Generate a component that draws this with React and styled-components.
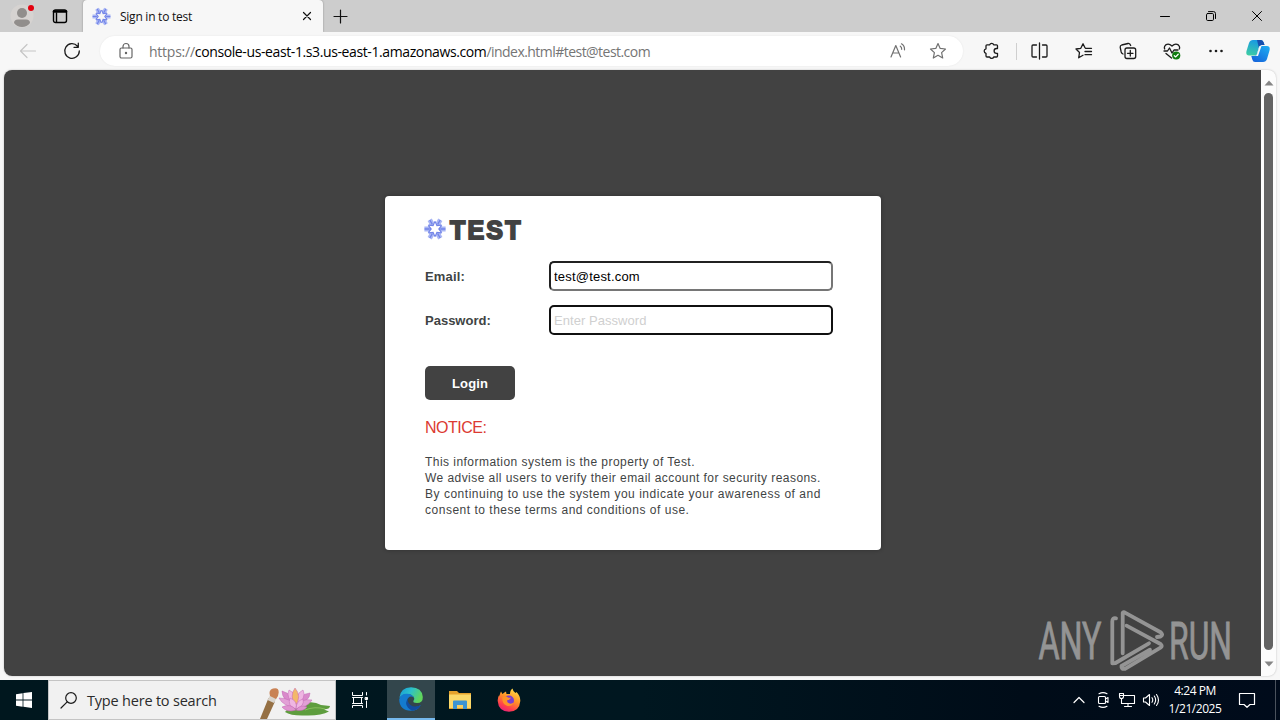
import React from 'react';
import styled, { createGlobalStyle, css } from 'styled-components';


const GlobalStyle = createGlobalStyle`
  * {
    box-sizing: border-box;
  }

  body {
    margin: 0;
    overflow: hidden;
    font-family: 'Open Sans', 'Noto Sans', sans-serif;
  }
`;

const Screen = styled.div`
  width: 1280px;
  height: 720px;
  display: flex;
  flex-direction: column;
  background-color: #f7f7f7;
`;

const center = css`
  display: flex;
  align-items: center;
  justify-content: center;
`;

/* tab strip */

const TabStrip = styled.div`
  height: 32px;
  display: flex;
  background-color: #cdcdcd;
`;

const StripButton = styled.div`
  ${center}
  width: ${({ $width }) => $width}px;
  height: 32px;
`;

const Tab = styled.div`
  width: 240px;
  height: 32px;
  padding: 0 8px 0 10px;
  display: flex;
  align-items: center;
  background-color: #f7f7f7;
  border-radius: 4px 4px 0 0;
  box-shadow: 0 0 2px rgba(0, 0, 0, 0.35);
  clip-path: inset(0 -3px 0 -3px);
`;

const TabTitle = styled.span`
  flex: 1;
  margin-left: 10px;
  font-size: 12px;
  letter-spacing: -0.25px;
  color: #111;
`;

const WindowButtons = styled.div`
  display: flex;
  margin-left: auto;
`;

/* toolbar */

const Toolbar = styled.div`
  height: 38px;
  padding: 0 2px 0 6px;
  display: flex;
  align-items: center;
`;

const ToolButton = styled.div`
  ${center}
  width: ${({ $width = 44 }) => $width}px;
  height: 38px;
  margin-right: ${({ $gap = 0 }) => $gap}px;
`;

const AddressBar = styled.div`
  width: 863px;
  height: 30px;
  margin: 0 6px;
  padding: 0 16px 0 18px;
  display: flex;
  align-items: center;
  gap: 22px;
  background-color: #fff;
  border-radius: 15px;
  box-shadow: 0 0 2px rgba(0, 0, 0, 0.08);
`;

const Url = styled.div`
  flex: 1;
  margin-left: -7px;
  font-size: 14px;
  letter-spacing: -0.24px;
  white-space: nowrap;
  color: #757575;
`;

const Host = styled.span`
  letter-spacing: -0.39px;
  color: #000;
`;

const Path = styled.span`
  letter-spacing: -0.54px;
`;

const Divider = styled.div`
  width: 1px;
  height: 17px;
  margin: 0 0 0 3px;
  background-color: #cfcfcf;
`;

/* page */

const Viewport = styled.div`
  position: relative;
  width: 1272px;
  height: 606px;
  margin-left: 4px;
  display: flex;
  border-radius: 8px;
  overflow: hidden;
  background-color: #fcfcfc;
  box-shadow: 0 0 2px rgba(0, 0, 0, 0.25);
`;

const Page = styled.div`
  width: 1257px;
  padding: 126px 0 0 381px;
  background-color: #424242;
`;

const Scrollbar = styled.div`
  width: 15px;
  padding-top: 10px;
  display: flex;
  flex-direction: column;
  align-items: center;
`;

const Thumb = styled.div`
  width: 9px;
  height: 557px;
  margin: 7px 0 11px;
  border-radius: 5px;
  background-color: #636363;
`;

const Card = styled.form`
  width: 496px;
  height: 354px;
  padding: 20px 40px 0;
  background-color: #fff;
  border-radius: 4px;
  box-shadow: 0 0 4px rgba(0, 0, 0, 0.3);
  font-family: 'Liberation Sans', Arial, sans-serif;
  font-size: 13px;
  color: #3f4444;
`;

const Brand = styled.div`
  height: 28px;
  display: flex;
  align-items: center;

  svg {
    margin-bottom: 3px;
  }
`;

const BrandName = styled.span`
  margin-left: 5px;
  font-size: 25px;
  font-weight: bold;
  line-height: 28px;
  letter-spacing: 2.2px;
  color: #424242;
  -webkit-text-stroke: 1.8px #424242;
`;

const Field = styled.label`
  height: 30px;
  margin-top: ${({ $top }) => $top}px;
  display: flex;
  align-items: center;
`;

const FieldLabel = styled.span`
  width: 124px;
  font-weight: bold;
  letter-spacing: ${({ $tracking = 0 }) => $tracking}px;
`;

const Input = styled.input`
  width: 284px;
  height: 30px;
  padding: 1px 3px;
  border: ${({ $focused }) => ($focused ? '2px solid #101010' : '2px inset #767676')};
  border-radius: 5px;
  outline: none;
  background-color: #fff;
  font-family: inherit;
  font-size: 13px;
  letter-spacing: 0.2px;
  color: #000;

  &::placeholder {
    letter-spacing: 0.05px;
    color: #d0d0d0;
  }
`;

const LoginButton = styled.button`
  width: 90px;
  height: 34px;
  margin-top: 31px;
  padding: 0;
  display: block;
  border: 0;
  border-radius: 5px;
  background-color: #424242;
  font-family: inherit;
  font-size: 13px;
  font-weight: bold;
  letter-spacing: 0.1px;
  color: #fff;
`;

const NoticeTitle = styled.div`
  margin-top: 19px;
  font-size: 16px;
  line-height: 18px;
  letter-spacing: -0.5px;
  color: #dc3a32;
`;

const NoticeText = styled.div`
  margin-top: 17px;
  font-size: 12px;
  line-height: 16px;
  white-space: nowrap;
`;

const NoticeLine = styled.div`
  letter-spacing: ${({ $tracking }) => $tracking}px;
`;

const Watermark = styled.svg`
  position: absolute;
  right: 36px;
  bottom: 0;
  width: 204px;
  height: 70px;
  overflow: visible;
  opacity: 0.55;
`;

/* taskbar */

const Taskbar = styled.div`
  height: 40px;
  margin-top: 4px;
  display: flex;
  background: linear-gradient(90deg, #00171e 0%, #001720 50%, #000c18 80%, #000b1b 100%);
  color: #fff;
`;

const TaskButton = styled.div`
  ${center}
  width: 48px;
  height: 40px;
  margin-left: ${({ $left = 0 }) => $left}px;
  background-color: ${({ $active }) => ($active ? '#33464c' : 'transparent')};
  border-bottom: ${({ $active }) => ($active ? '2px solid #76b9ed' : '0')};
`;

const SearchBox = styled.div`
  width: 288px;
  height: 40px;
  padding-left: 11px;
  display: flex;
  align-items: center;
  border: 1px solid #c4c4c4;
  background-color: #f1f1f1;
`;

const SearchText = styled.span`
  flex: 1;
  margin-left: 9px;
  font-size: 14.5px;
  letter-spacing: -0.2px;
  white-space: nowrap;
  color: #2b2b2b;
`;

const Tray = styled.div`
  margin-left: auto;
  display: flex;
  align-items: center;
`;

const TrayItem = styled.div`
  ${center}
  width: ${({ $width = 24 }) => $width}px;
  height: 40px;
`;

const Clock = styled.div`
  width: 64px;
  text-align: center;
  font-size: 12px;
  line-height: 18px;
  letter-spacing: -0.45px;
  white-space: nowrap;
`;

const ShowDesktop = styled.div`
  width: 5px;
  height: 40px;
  border-left: 1px solid #4a525d;
`;

function Icon({ w = 18, h = 18, color = '#1b1b1b', stroke = 1.2, children }) {
  return (
    <svg
      width={w}
      height={h}
      viewBox={`0 0 ${w} ${h}`}
      fill="none"
      stroke={color}
      strokeWidth={stroke}
      strokeLinecap="round"
      strokeLinejoin="round"
    >
      {children}
    </svg>
  );
}

function Snowflake({ size }) {
  return (
    <svg width={size} height={size} viewBox="0 0 20 20" overflow="visible">
      {[0, 60, 120, 180, 240, 300].map((angle) => (
        <g key={angle} transform={`rotate(${angle} 10 10)`}>
          <path d="M-0.6 7.6 L3.4 7.6 L6 10 L3.4 12.4 L-0.6 12.4Z" fill="#a9b6f4" />
          <path d="M-0.4 10 H4.5 M3.3 6.4 L6.1 10 L3.3 13.6" fill="none" stroke="#7284e8" strokeWidth="1.3" />
        </g>
      ))}
    </svg>
  );
}

function TabStripRow() {
  return (
    <TabStrip>
      <StripButton $width={44}>
        <svg width="26" height="26" viewBox="0 0 26 26">
          <circle cx="13" cy="13" r="11.5" fill="#d6d3d1" />
          <circle cx="13" cy="10" r="5" fill="#918e8c" />
          <path d="M5 20 Q5 16.5 9 16.5 H17 Q21 16.5 21 20 Q18 24 13 24 Q8 24 5 20Z" fill="#918e8c" />
          <circle cx="22" cy="5" r="3" fill="#e3000f" />
        </svg>
      </StripButton>
      <StripButton $width={32}>
        <Icon w={16} h={16} color="#000" stroke={1.4}>
          <rect x="1.5" y="2" width="13" height="12.5" rx="2" />
          <path d="M2 3.5 H14" strokeWidth="2.6" />
          <path d="M4.5 5 V14" />
        </Icon>
      </StripButton>
      <StripButton $width={7} />
      <Tab>
        <Snowflake size={17} />
        <TabTitle>Sign in to test</TabTitle>
        <Icon w={16} h={16} color="#111">
          <path d="M4.5 4.5 L11.5 11.5 M11.5 4.5 L4.5 11.5" />
        </Icon>
      </Tab>
      <StripButton $width={35}>
        <Icon w={15} h={15} color="#111" stroke={1.2}>
          <path d="M7.5 1 V14 M1 7.5 H14" />
        </Icon>
      </StripButton>
      <WindowButtons>
        <StripButton $width={46}>
          <Icon w={10} h={10} color="#000" stroke={1}>
            <path d="M0.5 5.5 H9.5" />
          </Icon>
        </StripButton>
        <StripButton $width={46}>
          <Icon w={10} h={10} color="#000" stroke={1}>
            <rect x="0.5" y="2.5" width="7" height="7" rx="1.2" />
            <path d="M2.5 0.6 H7.5 Q9.5 0.6 9.5 2.6 V7.5" />
          </Icon>
        </StripButton>
        <StripButton $width={46}>
          <Icon w={10} h={10} color="#000" stroke={1}>
            <path d="M0.5 0.5 L9.5 9.5 M9.5 0.5 L0.5 9.5" />
          </Icon>
        </StripButton>
      </WindowButtons>
    </TabStrip>
  );
}

function ToolbarRow() {
  return (
    <Toolbar>
      <ToolButton>
        <Icon color="#c6c6c6">
          <path d="M16.5 9 H1.5 M8 2.5 L1.5 9 L8 15.5" />
        </Icon>
      </ToolButton>
      <ToolButton>
        <Icon stroke={1.3}>
          <path d="M14.5 4.2 A7.3 7.3 0 1 0 16.3 9 M15.3 1.2 V5.3 H11" />
        </Icon>
      </ToolButton>
      <AddressBar>
        <Icon w={16} color="#666">
          <rect x="2" y="6" width="12" height="10" rx="1.5" />
          <path d="M5 6 V4.5 A3 3 0 0 1 11 4.5 V6" />
          <circle cx="8" cy="11" r="0.6" fill="#666" />
        </Icon>
        <Url>
          https://<Host>console-us-east-1.s3.us-east-1.amazonaws.com</Host>
          <Path>/index.html#test@test.com</Path>
        </Url>
        <Icon color="#707070">
          <path d="M2 15 L6.8 3.5 L11.6 15 M3.6 11 H10 M11.3 4.2 Q12.8 5.3 12.7 7.3 M12.5 1.8 Q15.8 4 15.5 7.8" />
        </Icon>
        <Icon color="#707070">
          <path d="M9 1.5 L11.2 6.4 L16.5 7 L12.6 10.6 L13.7 16 L9 13.3 L4.3 16 L5.4 10.6 L1.5 7 L6.8 6.4Z" />
        </Icon>
      </AddressBar>
      <ToolButton>
        <Icon stroke={1.3}>
          <path d="M5 2.8 H7.7 A2.1 2.1 0 0 1 11.7 2.8 H14.5 Q15.5 2.8 15.5 3.8 V6.5 H14.5 A2.3 2.3 0 0 0 14.5 11.3 H15.5 V14 Q15.5 15 14.5 15 H11.7 A2.1 2.1 0 0 1 7.7 15 H5 Q4 15 4 14 V11.3 A2.3 2.3 0 0 1 4 6.8 V3.8 Q4 2.8 5 2.8Z" />
        </Icon>
      </ToolButton>
      <Divider />
      <ToolButton $gap={1}>
        <Icon stroke={1.3}>
          <path d="M6.5 3 H3 Q2 3 2 4 V14 Q2 15 3 15 H6.5 M12.5 3 H16 Q17 3 17 4 V14 Q17 15 16 15 H12.5 M9.5 1 V17" />
        </Icon>
      </ToolButton>
      <ToolButton>
        <Icon stroke={1.3}>
          <path d="M10 5.8 L8 1.8 L5.8 6.3 L1 7 L4.5 10.5 L3.7 15.8 L8 13.3 M10.5 6.3 H16.5 M10 9.5 H16.5 M10 12.7 H16.5" />
        </Icon>
      </ToolButton>
      <ToolButton>
        <Icon stroke={1.3}>
          <rect x="6" y="6" width="10.7" height="10.5" rx="2" />
          <path d="M11.3 8.5 V14 M8.5 11.3 H14 M4 12 Q2.6 11.5 2.2 10 L1.2 5.3 Q1 3.5 2.7 3 L9 1.5 Q11 1.2 11.7 3.5" />
        </Icon>
      </ToolButton>
      <ToolButton>
        <Icon stroke={1.3}>
          <path d="M1.7 7 Q0.7 4.5 2.7 2.9 Q5.7 0.8 9 4 Q12.3 0.8 15.3 2.9 Q17.3 4.5 16.3 7 M1 9 H4.5 L6.5 6 L9 11 L11 8 H15 M3 11.5 L8.5 16" />
          <circle cx="13.2" cy="13.5" r="4.1" fill="#107c10" stroke="none" />
          <path d="M11.3 13.7 L12.7 14.9 L15.2 12.3" stroke="#fff" />
        </Icon>
      </ToolButton>
      <ToolButton>
        <Icon stroke={0}>
          <circle cx="3.5" cy="9" r="1.3" fill="#1b1b1b" />
          <circle cx="9" cy="9" r="1.3" fill="#1b1b1b" />
          <circle cx="14.5" cy="9" r="1.3" fill="#1b1b1b" />
        </Icon>
      </ToolButton>
      <ToolButton $width={40}>
        <CopilotLogo />
      </ToolButton>
    </Toolbar>
  );
}

function CopilotLogo() {
  return (
    <svg width="24" height="24" viewBox="0 0 24 24">
      <defs>
        <linearGradient id="copilotLeft" x1="0.3" y1="0" x2="0" y2="1">
          <stop offset="0" stopColor="#1a9be0" />
          <stop offset="1" stopColor="#3fd0a0" />
        </linearGradient>
        <linearGradient id="copilotRight" x1="1" y1="0" x2="0.3" y2="1">
          <stop offset="0" stopColor="#1fb0f2" />
          <stop offset="1" stopColor="#1668dc" />
        </linearGradient>
      </defs>
      <path d="M7 1 H15 Q17 1 17.7 3.5 L18.5 6 H15.5 Q13.5 6 12.8 8.5 L10.5 16.5 H3 Q-0.5 16.5 0.5 12 L3 4 Q4 1 7 1Z" fill="url(#copilotLeft)" />
      <path d="M11 1 H15 Q17 1 17.7 3.5 L18.5 6 H15.5 Q13.5 6 12.8 8.5Z" fill="#174fae" />
      <path d="M17 23 H9 Q7 23 6.3 20.5 L5.3 17 H8.5 Q10.5 17 11.2 14.5 L13.5 7 H21 Q24.5 7 23.5 11.5 L21 20 Q20 23 17 23Z" fill="url(#copilotRight)" />
      <path d="M13.5 7 H15.5 L12 17 H9 Q10.5 17 11.2 14.5Z" fill="#f7f7f7" />
    </svg>
  );
}

function LoginCard() {
  return (
    <Card>
      <Brand>
        <Snowflake size={20} />
        <BrandName>TEST</BrandName>
      </Brand>
      <Field $top={17}>
        <FieldLabel $tracking={0.15}>Email:</FieldLabel>
        <Input type="text" defaultValue="test@test.com" />
      </Field>
      <Field $top={14}>
        <FieldLabel>Password:</FieldLabel>
        <Input type="password" placeholder="Enter Password" $focused />
      </Field>
      <LoginButton type="button">Login</LoginButton>
      <NoticeTitle>NOTICE:</NoticeTitle>
      <NoticeText>
        <NoticeLine $tracking={0.46}>This information system is the property of Test.</NoticeLine>
        <NoticeLine $tracking={0.44}>
          We advise all users to verify their email account for security reasons.
        </NoticeLine>
        <NoticeLine $tracking={0.52}>
          By continuing to use the system you indicate your awareness of and
        </NoticeLine>
        <NoticeLine $tracking={0.51}>consent to these terms and conditions of use.</NoticeLine>
      </NoticeText>
    </Card>
  );
}

function AnyRunMark() {
  return (
    <Watermark viewBox="0 0 204 70">
      <g fontFamily="Roboto" fontSize="51.5" fill="#d8d8d8" stroke="#d8d8d8" strokeWidth="0.8">
        <text x="2.5" y="53.3" textLength="63" lengthAdjust="spacingAndGlyphs">ANY</text>
        <text x="133" y="53.3" textLength="63" lengthAdjust="spacingAndGlyphs">RUN</text>
      </g>
      <g fill="none" stroke="#d8d8d8" strokeWidth="3.8" strokeLinecap="round" strokeLinejoin="round">
        <path d="M80 12.3 Q76.3 11.5 76.3 15.5 V57.3 L79.5 57 L113 37.3" />
        <path d="M86.7 47.3 V7 Q87 5.7 88.5 6.3 L125 26.5 Q127.5 29 124.5 30.5 L121 31" />
        <path d="M90.5 19.7 L124.5 38 Q127 40 124.5 41.7 L89 62.8 Q85 63.5 85.5 60 L114 43.7" />
      </g>
    </Watermark>
  );
}

function SearchArt() {
  return (
    <svg width="78" height="38" viewBox="0 0 78 38">
      <path d="M3 38 L11.5 17 L18 20.5 L10 38Z" fill="#957044" />
      <path d="M10.5 19 L13.5 13.5 L20 16.5 L17 22Z" fill="#d9d4cd" />
      <path d="M13 15 Q11 9 16 7.5 Q22 6 21.7 11.5 Q21.5 16 19 18Z" fill="#c98255" />
      <path d="M28 31 Q33 23 48 22 Q57 20 64 24 L73 25 Q73 28 67 28.5 L72 30.5 Q64 35 48 34.5 Q34 35 28 31Z" fill="#5e9d3e" />
      <path d="M48 29 Q58 25 68 28" fill="none" stroke="#87bd5c" />
      <g stroke="#c367b4" strokeWidth="0.5">
        <path d="M39 25 Q25 20 25 10 Q36 13 39 25Z" fill="#d98acb" />
        <path d="M39 25 Q53 20 53 12 Q42 13 39 25Z" fill="#d98acb" />
        <path d="M39 27 Q26 25 22 17 Q35 17 39 27Z" fill="#e2a0d6" />
        <path d="M39 27 Q50 27 55 19 Q43 17 39 27Z" fill="#e2a0d6" />
        <path d="M39 25 Q28 17 32 9 Q41 13 39 25Z" fill="#eeb5e2" />
        <path d="M39 25 Q50 17 46 9 Q38 13 39 25Z" fill="#eeb5e2" />
        <path d="M38.5 25 Q32 15 38 7 Q45 15 38.5 25Z" fill="#f3b86a" />
        <path d="M39 28 Q30 25 33 17 Q41 20 39 28Z" fill="#efb6e2" />
        <path d="M39 28 Q48 25 46 18 Q39 20 39 28Z" fill="#efb6e2" />
        <path d="M39 29 Q30 32 25 26 Q34 22 39 29Z" fill="#df93d0" />
        <path d="M39 29 Q46 31 50 26 Q43 23 39 29Z" fill="#df93d0" />
      </g>
    </svg>
  );
}

function EdgeLogo() {
  return (
    <svg width="24" height="24" viewBox="0 0 24 24">
      <defs>
        <linearGradient id="edgeTop" x1="0" y1="0" x2="1" y2="0.4">
          <stop offset="0" stopColor="#1598d8" />
          <stop offset="0.5" stopColor="#2cc1cb" />
          <stop offset="1" stopColor="#60d65c" />
        </linearGradient>
      </defs>
      <path d="M0.3 11 Q1.5 0.5 12 0.3 Q23 0.5 23.8 10 Q24 16 18 16 Q13.5 16 14.5 13.8 Q16 12 14.8 10 Q11 5.5 4.5 8 Q1 9.5 0.3 11Z" fill="url(#edgeTop)" />
      <path d="M0.2 12.5 Q1.5 6.5 8 6.8 Q13.5 7 15 11 Q12 8.2 9.2 11 Q6.5 14.5 9.5 18.3 Q14 22 21.8 18.2 Q18.5 23.8 12 23.8 Q0.5 23.5 0.2 12.5Z" fill="#147bcf" />
      <path d="M9.2 11 Q5 16 9 20.8 Q10.5 22.5 13 23.7 Q18.7 23.5 21.8 18.2 Q15 21 11.5 18 Q7.5 14.5 9.2 11Z" fill="#124c9e" />
    </svg>
  );
}

function TaskbarRow() {
  return (
    <Taskbar>
      <TaskButton>
        <svg width="16" height="16" viewBox="0 0 16 16" fill="#fff">
          <path d="M0 2.2 L6.6 1.2 V7.5 H0Z M7.4 1.1 L16 0 V7.5 H7.4Z M0 8.4 H6.6 V14.7 L0 13.8Z M7.4 8.4 H16 V16 L7.4 14.8Z" />
        </svg>
      </TaskButton>
      <SearchBox>
        <Icon>
          <circle cx="11" cy="7" r="5.3" />
          <path d="M7.2 10.8 L1 17" />
        </Icon>
        <SearchText>Type here to search</SearchText>
        <SearchArt />
      </SearchBox>
      <TaskButton>
        <Icon w={18} color="#fff" stroke={1}>
          <path d="M1.5 1.5 V4.5 H11.5 V1.5 M1.5 16.5 V14.5 H11.5 V16.5 M2.5 6.5 V12.5 M10.5 6.5 V12.5 M1.5 6.5 H11.5 M1.5 12.5 H11.5 M15.5 1.5 V4 M15.5 10 V16.5" />
          <rect x="14.5" y="6.5" width="2" height="2" fill="#fff" />
        </Icon>
      </TaskButton>
      <TaskButton $left={3} $active>
        <EdgeLogo />
      </TaskButton>
      <TaskButton $left={1}>
        <svg width="22" height="20" viewBox="0 0 22 20">
          <path d="M0 1 H8 L10 3 H22 V19 H0Z" fill="#e5a22c" />
          <path d="M0 4.5 H22 V18 H0Z" fill="#fbd869" />
          <path d="M4 19 V11.5 Q4 10.5 5 10.5 H17 Q18 10.5 18 11.5 V19 H14 V15.5 H8 V19Z" fill="#3c94d2" />
          <path d="M8 15 H14 V18 H8Z" fill="#f6cf62" />
        </svg>
      </TaskButton>
      <TaskButton $left={1}>
        <svg width="24" height="24" viewBox="0 0 24 24">
          <defs>
            <linearGradient id="fox" x1="0.8" y1="0" x2="0.3" y2="1">
              <stop offset="0" stopColor="#ffe14a" />
              <stop offset="0.45" stopColor="#ff9327" />
              <stop offset="0.8" stopColor="#ff3d4d" />
              <stop offset="1" stopColor="#e5217b" />
            </linearGradient>
          </defs>
          <path d="M4 3.5 L5.5 6 Q7.5 4 9 3.5 L9.5 6 H13 Q13 2 15.5 0.5 Q16 3.5 18.5 5 L19.5 4 Q23.5 8 23.3 13 Q22.5 23.5 12 23.8 Q1.5 23.5 0.7 13 Q0.5 9.5 2.2 7 L2.5 8.5 Q2.8 5.5 4 3.5Z" fill="url(#fox)" />
          <circle cx="12" cy="12.5" r="5" fill="#7a3fd0" />
          <path d="M5.5 9 Q9 7 11.5 9.7 H14 Q13 12 10.5 12 Q9.5 13.8 11.5 15 Q14 16.5 17 14.5 Q14 19.5 9.5 17.5 Q4.5 15 5.5 9Z" fill="#ff9327" />
        </svg>
      </TaskButton>
      <Tray>
        <TrayItem>
          <Icon w={14} h={14} color="#fff">
            <path d="M2 9.5 L7 4.5 L12 9.5" />
          </Icon>
        </TrayItem>
        <TrayItem>
          <Icon w={16} color="#fff" stroke={1.1}>
            <rect x="3.5" y="5.5" width="7" height="7" rx="1" />
            <path d="M10.5 8 L13 6.5 V11.5 L10.5 10 M4 2.7 Q8 0.5 12 2.7 M4 15.3 Q8 17.5 12 15.3" />
          </Icon>
        </TrayItem>
        <TrayItem>
          <Icon w={18} h={16} color="#fff" stroke={1.1}>
            <path d="M6.5 3.5 H16.5 V11.5 H3.5 V7 M10 11.5 V14.5 M6.5 14.5 H13.5 M1.5 1.5 H5.5 V4.5 Q5.5 6.5 3.5 6.5 Q1.5 6.5 1.5 4.5Z M1.5 3.5 H5.5" />
          </Icon>
        </TrayItem>
        <TrayItem>
          <Icon w={18} h={16} color="#fff" stroke={1.1}>
            <path d="M1.5 6 H3.5 L7.5 2.5 V13.5 L3.5 10 H1.5Z M10 5.7 Q11.5 8 10 10.3 M12.3 4 Q15 8 12.3 12 M14.5 2.5 Q18.5 8 14.5 13.5" />
          </Icon>
        </TrayItem>
        <Clock>
          4:24 PM<br />1/21/2025
        </Clock>
        <TrayItem $width={40}>
          <Icon w={18} h={18} color="#fff">
            <path d="M1.5 2.5 H16.5 V13.5 H12 L9 16.3 L6 13.5 H1.5Z" />
          </Icon>
        </TrayItem>
        <TrayItem $width={8} />
        <ShowDesktop />
      </Tray>
    </Taskbar>
  );
}

export default function App() {
  return (
    <Screen>
      <GlobalStyle />
      <TabStripRow />
      <ToolbarRow />
      <Viewport>
        <Page>
          <LoginCard />
        </Page>
        <Scrollbar>
          <svg width="10" height="6" viewBox="0 0 10 6">
            <path d="M0.5 5.5 L5 0.5 L9.5 5.5Z" fill="#858585" />
          </svg>
          <Thumb />
          <svg width="10" height="6" viewBox="0 0 10 6">
            <path d="M0.5 0.5 L5 5.5 L9.5 0.5Z" fill="#858585" />
          </svg>
        </Scrollbar>
        <AnyRunMark />
      </Viewport>
      <TaskbarRow />
    </Screen>
  );
}
